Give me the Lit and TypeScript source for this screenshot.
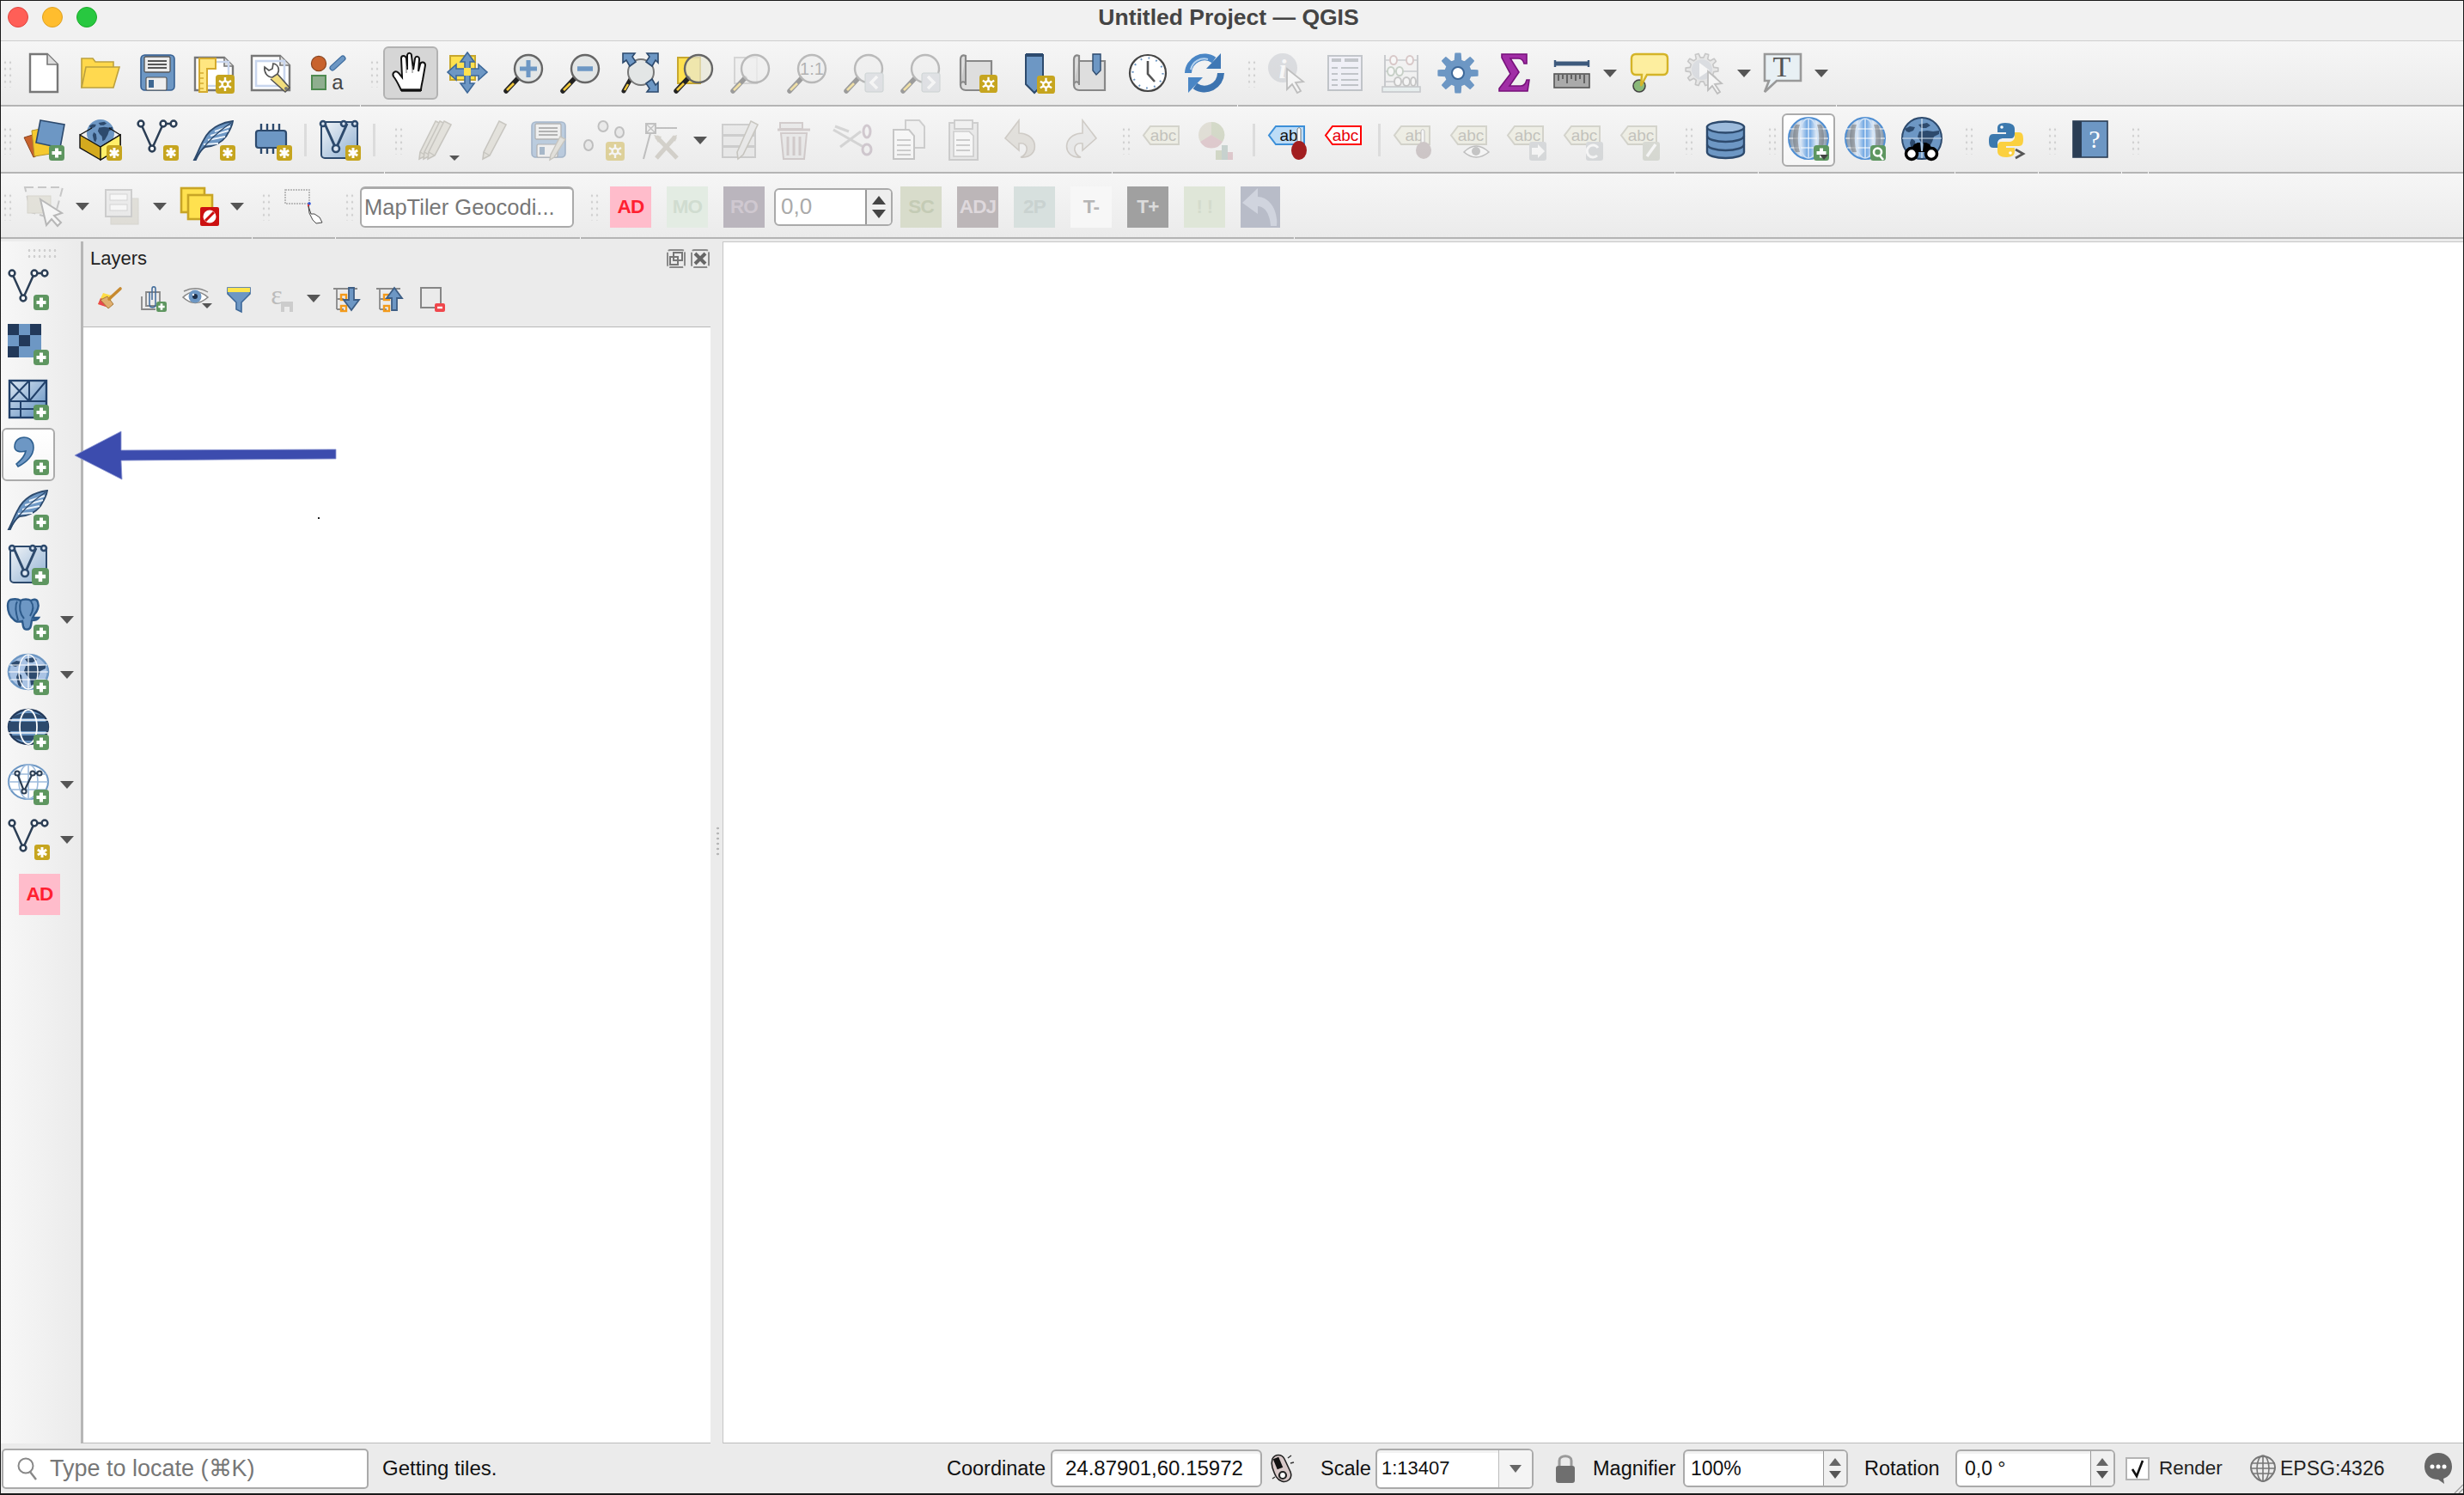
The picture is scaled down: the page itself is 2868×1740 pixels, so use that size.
import { LitElement, html, css, svg } from "lit";
import { customElement } from "lit/decorators.js";

const B = "#6d97c4", D = "#2d4a6d", N = "#2b3e55", GO = "#c6a51f", Y = "#ffe14f";

const gearD = (cx: number, cy: number, r1: number, r2: number, n: number) => {
  let d = "";
  const st = (Math.PI * 2) / n;
  for (let i = 0; i < n; i++) {
    const a = i * st;
    const pts = [[r1, a - st * 0.3], [r2, a - st * 0.16], [r2, a + st * 0.16], [r1, a + st * 0.3]];
    for (const [r, t] of pts) {
      d += (d ? "L" : "M") + (cx + r * Math.cos(t)).toFixed(1) + " " + (cy + r * Math.sin(t)).toFixed(1);
    }
  }
  return d + "Z";
};

const plus = (x = 30, y = 30, s = 18) => svg`<g transform="translate(${x} ${y}) scale(${s / 18})"><rect width="18" height="18" rx="3.5" fill="#5e9660"/><path d="M9 3.5v11M3.5 9h11" stroke="#fff" stroke-width="4"/></g>`;
const star = (x = 31, y = 30, s = 18) => svg`<g transform="translate(${x} ${y}) scale(${s / 18})"><rect width="18" height="18" rx="3" fill="${GO}"/><path d="M9 3v12M3.8 6l10.4 6M3.8 12l10.4-6" stroke="#fff" stroke-width="3"/></g>`;
const gearB = (x = 26, y = 26, s = 22) => svg`<g transform="translate(${x} ${y}) scale(${s / 22})"><rect width="22" height="22" rx="3.5" fill="${GO}"/><path d="M11 3v16M4 7l14 8M4 15l14-8" stroke="#fff" stroke-width="2.4"/><circle cx="11" cy="11" r="4.6" fill="#fff"/><circle cx="11" cy="11" r="2.2" fill="${GO}"/></g>`;

const vee = (sw = 2.5, c = N) => svg`<path d="M5 5 18 34 31 5H43" fill="none" stroke="${c}" stroke-width="${sw}"/><g fill="#fff" stroke="${c}" stroke-width="${sw}"><circle cx="5" cy="5" r="3.4"/><circle cx="31" cy="5" r="3.4"/><circle cx="43" cy="5" r="3.4"/><circle cx="18" cy="34" r="3.4"/></g>`;
const feather = () => svg`<path d="M46 2C31 4 19 10 12 24 8 31 5 39 1 47l2 0c3-7 7-13 11-15 8 0 18-4 24-12 3-5 7-11 8-18Z" fill="${B}" stroke="${D}" stroke-width="1.8"/><path d="M17 24l20-4M20 19l21-6M25 14l18-6M12 29l17-1" stroke="#e9f1fa" stroke-width="2"/><path d="M3 46C12 30 26 16 44 4" fill="none" stroke="${D}" stroke-width="1.4"/>`;
const virtualBox = () => svg`<rect x="3" y="3" width="42" height="42" rx="4" fill="url(#vg)" stroke="${D}" stroke-width="2"/><path d="M7 5 20 34 33 5" fill="none" stroke="${D}" stroke-width="3"/><g fill="#dfe8f3" stroke="${D}" stroke-width="2.6"><circle cx="20" cy="34" r="4"/><circle cx="5" cy="5" r="3"/><circle cx="29" cy="5" r="3"/><circle cx="42" cy="5" r="3"/></g>`;

const mag = (inner: unknown = "", lens = "#e3e6e6") => svg`<path d="M17 30 3 45" stroke="#222" stroke-width="5.5" stroke-linecap="round"/><path d="M12 36 4 44" stroke="#f2c93c" stroke-width="2.6"/><circle cx="29" cy="19" r="16" fill="${lens}" stroke="#666" stroke-width="2.4"/>${inner}`;
const tag = (t: string, stroke: string, fill: string, tc: string) => svg`<path d="M10 8H43V29H10L2 18.5Z" fill="${fill}" stroke="${stroke}" stroke-width="2"/><text x="25" y="25" font-family="Liberation Sans" font-size="19" text-anchor="middle" fill="${tc}">${t}</text>`;
const pencil = (t = "") => svg`<g transform="${t}"><path d="M31 2 39 6 20 42 12 46 13 38Z" fill="#cfcbbd" stroke="#8b8779" stroke-width="1.6"/><path d="M13 38 20 42" stroke="#8b8779" stroke-width="1.4"/></g>`;
const saveShape = () => svg`<rect x="5" y="3" width="39" height="41" rx="4.5" fill="${B}" stroke="#365f91" stroke-width="1.6"/><rect x="9" y="5" width="30" height="18" rx="1.5" fill="#ececec" stroke="#555" stroke-width="1.3"/><path d="M13 10H35M13 14H35M13 18H35" stroke="#555" stroke-width="1.9"/><rect x="11" y="29" width="24" height="15" rx="1.5" fill="#eee" stroke="#555" stroke-width="1.2"/><rect x="14" y="32" width="6" height="9" fill="#3e6791"/>`;
const scroll = () => svg`<path d="M10 4C6 2 4 5 4 8V38C4 42 7 44 10 44H40V10H10Z" fill="#dedede" stroke="#888" stroke-width="2.2"/><path d="M4 38C4 33 10 33 10 38V5" fill="#c9c9c9" stroke="#888" stroke-width="2"/>`;
const globeRaster = (extra: unknown = "") => svg`<ellipse cx="24" cy="22" rx="23" ry="24" fill="url(#gg)" stroke="#4f8ed2" stroke-width="2"/><path d="M24 -1V45M2 11H46M1 22H47M3 33H45" stroke="#fff" stroke-width="1.2"/><ellipse cx="24" cy="22" rx="11" ry="23" fill="none" stroke="#cfe2f6" stroke-width="1.6"/><path d="M9 6C5 14 5 30 9 38L14 38C11 30 11 14 14 6ZM39 6C43 14 43 30 39 38L34 38C37 30 37 14 34 6Z" fill="#585858" opacity=".4"/>${extra}`;
const continents = (c = D) => svg`<path d="M4 11l6-3 6 1-2 4-5 2-3-1ZM20 6l10-2 4 3-5 3-6 0ZM22 14l8-1 7 1 7-1 0 4-6 3-2 6-5 9-4 2-1-8-4-4-3-5 2-6ZM12 22l4 3 1 8-2 6-3-3-2-9Z" fill="${c}"/>`;

const ic: Record<string, unknown> = {
  file: svg`<path d="M8 2H28L40 14V46H8Z" fill="#fff" stroke="#777" stroke-width="2.4"/><path d="M28 2V14H40" fill="#ddd" stroke="#777" stroke-width="1.6"/>`,
  folder: svg`<path d="M2 41V7H15L18 11H39V18H8L2 41Z" fill="#ffd84a" stroke="#bca13f" stroke-width="1.6"/><path d="M7 17H46L39 41H2Z" fill="#ffd94f" stroke="#bca13f" stroke-width="1.6"/>`,
  save: saveShape(),
  layout: svg`<path d="M2 6H36L46 16V44H2Z" fill="#fff" stroke="#777" stroke-width="2.4"/><path d="M36 6V16H46" fill="#ddd" stroke="#777" stroke-width="1.6"/><rect x="8" y="11" width="33" height="28" fill="none" stroke="#c9d6ee" stroke-width="2.4"/><path d="M7 7H26V19H16V46H7Z" fill="#ffe680" stroke="#d4aa2e" stroke-width="2"/><path d="M7 24h5M7 30h5M7 36h5M7 42h5" stroke="#d4aa2e" stroke-width="1.6"/>${gearB()}`,
  manager: svg`<path d="M2 4H35L46 15V44H2Z" fill="#fff" stroke="#777" stroke-width="2.4"/><path d="M35 4V15H46" fill="#ddd" stroke="#777" stroke-width="1.6"/><rect x="7" y="10" width="33" height="29" fill="none" stroke="#c9d6ee" stroke-width="2.6"/><path d="M24 31 41 46 46 41 31 24" fill="#f2dd7c" stroke="#555" stroke-width="1.6"/><path d="M32 25C35 20 33 14 27 13L26 19 22 21 17 17C16 23 20 29 26 29Z" fill="#fff" stroke="#555" stroke-width="1.7"/><circle cx="42" cy="42" r="2" fill="#777"/>`,
  style: svg`<circle cx="14" cy="13" r="8.6" fill="#c8622c" stroke="#8a4520" stroke-width="1.2"/><path d="M30 18 42 7" stroke="#3c6a9c" stroke-width="7" stroke-linecap="round"/><path d="M30 18 42 7" stroke="${B}" stroke-width="4.6" stroke-linecap="round"/><rect x="6" y="27" width="16" height="16" fill="#8fae8f" stroke="#4e8a50" stroke-width="2"/><text x="36" y="43" font-family="Liberation Sans" font-size="24" text-anchor="middle" fill="#444">a</text>`,
  hand: svg`<path d="M13 44C10 38 8 33 4 28 2 24 6 20 10 24L14 29 13 7C13 3 18 3 19 7L20 20 20 3C21 0 25 0 25 4L27 20 29 7C30 4 34 4 34 8L33 22 35 14C36 10 41 11 41 15L38 32C37 37 36 41 36 44Z" fill="#fff" stroke="#111" stroke-width="2"/><path d="M13 44H36" stroke="#111" stroke-width="3.4"/><path d="M19 16V24M26 16V24" stroke="#777" stroke-width="1"/>`,
  pan: svg`<rect x="4" y="4" width="29" height="28" fill="${Y}" stroke="#c7a72f" stroke-width="2"/><path d="M24 0 32 11H27V19H37V14L47 23 37 32V27H27V36H32L24 47 16 36H21V27H11V32L1 23 11 14V19H21V11H16Z" fill="${B}" stroke="#3d6899" stroke-width="1.6"/><rect x="20" y="18" width="8" height="9" fill="${Y}"/>`,
  zin: mag(svg`<path d="M29 9V29M19 19H39" stroke="${B}" stroke-width="5"/>`),
  zout: mag(svg`<path d="M20 19H38" stroke="${B}" stroke-width="5.5"/>`),
  zfull: svg`<path d="M16 31 8 45" stroke="#222" stroke-width="5" stroke-linecap="round"/><path d="M13 37 9 44" stroke="#f2c93c" stroke-width="2.4"/><circle cx="28" cy="23" r="15" fill="#e3e6e6" stroke="#777" stroke-width="2"/><g fill="${B}" stroke="${D}" stroke-width="1.6"><path d="M7 1H21L18 5 22 11 15 16 11 9 7 12Z"/><path d="M48 1H35L38 5 34 11 41 16 45 9 48 12Z"/><path d="M48 46H35L38 42 34 36 41 31 45 38 48 35Z"/></g>`,
  zsel: svg`<rect x="5" y="6" width="26" height="30" fill="${Y}" stroke="#c7a72f" stroke-width="2"/>${mag("", "rgba(232,232,214,.7)")}`,
  zlayer: svg`<rect x="5" y="6" width="26" height="30" fill="#eee" stroke="#aaa" stroke-width="2"/>${mag("", "rgba(238,238,238,.7)")}`,
  znative: mag(svg`<text x="29" y="26" font-family="Liberation Sans" font-size="20" text-anchor="middle" fill="#555">1:1</text>`, "#eee"),
  zprev: svg`${mag("", "#eee")}<rect x="25" y="24" width="21" height="22" rx="2" fill="#c8ccd4" stroke="#9aa" stroke-width="1"/><path d="M39 28 32 35 39 42" fill="none" stroke="#fff" stroke-width="3.5"/>`,
  znext: svg`${mag("", "#eee")}<rect x="25" y="24" width="21" height="22" rx="2" fill="#c8ccd4" stroke="#9aa" stroke-width="1"/><path d="M32 28 39 35 32 42" fill="none" stroke="#fff" stroke-width="3.5"/>`,
  bmNew: svg`${scroll()}${gearB(26, 26, 21)}`,
  bmBlue: svg`<path d="M14 3H34V37L24 47 14 37Z" fill="${B}" stroke="${D}" stroke-width="2"/><path d="M14 3H34" stroke="${D}" stroke-width="4"/>${gearB(27, 27, 21)}`,
  bmShow: svg`${scroll()}<path d="M26 2H35V21L30 26 26 21Z" fill="${B}" stroke="${D}" stroke-width="1.4"/>`,
  clock: svg`<circle cx="24" cy="24" r="21" fill="#fff" stroke="#444" stroke-width="2.2"/><circle cx="24" cy="24" r="17.5" fill="none" stroke="${B}" stroke-width="2.2" stroke-dasharray="1.8 7.36"/><path d="M24 10V25L32 34" fill="none" stroke="#555" stroke-width="2.6"/>`,
  refresh: svg`<path d="M5 24A19 19 0 0 1 35 9" fill="none" stroke="#4a86c5" stroke-width="8"/><path d="M43 1V19H26Z" fill="#3f78b5"/><path d="M43 24A19 19 0 0 1 13 39" fill="none" stroke="#3d74b0" stroke-width="8"/><path d="M5 47V29H22Z" fill="#4a86c5"/><path d="M8 20A16 16 0 0 1 28 8" fill="none" stroke="#b7d3ee" stroke-width="2"/>`,
  identify: svg`<circle cx="18" cy="18" r="17" fill="#b8bcc4"/><text x="18" y="30" font-family="Liberation Serif" font-style="italic" font-weight="700" font-size="32" text-anchor="middle" fill="#fff">i</text><path d="M23 19 42 34 33 35 39 45 35 47 29 37 23 43Z" fill="#fff" stroke="#777" stroke-width="1.8"/>`,
  table: svg`<rect x="5" y="4" width="39" height="40" fill="#eef" stroke="#7c8590" stroke-width="2"/><path d="M9 9H20M24 9H40" stroke="#7c8590" stroke-width="4"/><path d="M9 18H16M20 18H40M9 25H16M20 25H40M9 32H16M20 32H40M9 38H16M20 38H40" stroke="#7c8590" stroke-width="2"/>`,
  abacus: svg`<path d="M5 3V40M43 3V40" stroke="#8d9299" stroke-width="2"/><rect x="2" y="40" width="44" height="6" fill="#dee" stroke="#8d9299" stroke-width="1.6"/><path d="M5 9H43M5 22H43M5 34H43" stroke="#8d9299" stroke-width="1.6"/><g fill="#fff" stroke-width="2"><ellipse cx="15" cy="9" rx="4" ry="5" stroke="#b28a8a"/><ellipse cx="34" cy="9" rx="4" ry="5" stroke="#b28a8a"/><ellipse cx="12" cy="22" rx="4" ry="5" stroke="#8aa08a"/><ellipse cx="22" cy="22" rx="4" ry="5" stroke="#8aa08a"/><ellipse cx="20" cy="34" rx="4" ry="5" stroke="#8a8a8a"/><ellipse cx="30" cy="34" rx="4" ry="5" stroke="#8a8a8a"/><ellipse cx="38" cy="34" rx="3" ry="5" stroke="#8a8a8a"/></g>`,
  gear: svg`<path d="${gearD(24, 24, 15, 23, 8)}" fill="${B}" stroke="${B}" stroke-width="1.6" stroke-linejoin="round"/><circle cx="24" cy="24" r="15" fill="${B}"/><circle cx="24" cy="24" r="7" fill="#fff" stroke="#3d6899" stroke-width="2"/>`,
  sigma: svg`<path d="M9 2H38V13H35C34 9 32 7 28 7H19L29 23 18 39H31C35 39 37 36 38 32H41L39 45H6V42L19 25 9 6Z" fill="#a12ea6" stroke="#77117b" stroke-width="1.6"/>`,
  ruler: svg`<path d="M5 13H44" stroke="#3e5a7d" stroke-width="5"/><path d="M5 9V17M44 9V17" stroke="#3e5a7d" stroke-width="2.4"/><rect x="4" y="25" width="41" height="16" fill="#aaa" stroke="#555" stroke-width="1.6"/><path d="M9 26V33M14 26V31M19 26V36M24 26V31M29 26V33M34 26V31M39 26V36" stroke="#444" stroke-width="1.4"/>`,
  comment: svg`<circle cx="13" cy="39" r="7" fill="#8ab87a" stroke="#444" stroke-width="1.6"/><path d="M9 2H41Q46 2 46 7V20Q46 26 41 26H22L15 39 16 26H9Q4 26 4 20V7Q4 2 9 2Z" fill="#fdee9f" stroke="#d4b428" stroke-width="2.4"/>`,
  action: svg`<path d="${gearD(20, 20, 14, 19, 10)}" fill="#d8d8d8" stroke="#888" stroke-width="1.6" stroke-linejoin="round"/><circle cx="20" cy="20" r="12" fill="#b8bec8"/><path d="M17 12 29 21 17 29Z" fill="#fff"/><path d="M27 22 43 36 35 37 41 46 38 48 32 39 27 44Z" fill="#fff" stroke="#777" stroke-width="1.8"/>`,
  tnote: svg`<path d="M3 2H45V33H17L3 46 8 33H3Z" fill="#e8f0f4" stroke="#999" stroke-width="2.6"/><text x="23" y="28" font-family="Liberation Serif" font-size="34" text-anchor="middle" fill="#555">T</text>`,
  dsm: svg`<path d="M1 21 14 17 25 38 12 44Z" fill="#c8622c" stroke="#8a4520" stroke-width="1"/><path d="M10 13 30 9 32 40 13 43Z" fill="#f5c92f" stroke="#b3922a" stroke-width="1"/><path d="M20 1 48 6 43 33 15 27Z" fill="${B}" stroke="${D}" stroke-width="1.6"/>${plus()}`,
  gpkg: svg`<circle cx="24" cy="16" r="16" fill="${B}"/><g transform="translate(8 0) scale(.68)">${continents()}</g><path d="M0 18 24 32 47 18 47 33 24 47 0 33Z" fill="#d4aa1e" stroke="#111" stroke-width="1.4"/><path d="M24 32 47 18 47 33 24 47Z" fill="#ffef6a" stroke="#111" stroke-width="1.4"/><path d="M0 18 14 10M47 18 34 10" stroke="#111" stroke-width="1.4"/>${star()}`,
  vStar: svg`${vee()}${star()}`,
  featherStar: svg`${feather()}${star()}`,
  chipStar: svg`<path d="M13 5V13M20 5V13M27 5V13M34 5V13M13 32V40M20 32V40M27 32V40M34 32V40" stroke="${D}" stroke-width="2.4"/><rect x="7" y="13" width="35" height="20" rx="3" fill="${B}" stroke="${D}" stroke-width="2.2"/>${star()}`,
  virtualStar: svg`${virtualBox()}${star()}`,
  pens: svg`${pencil("translate(-6 0)")}${pencil("translate(-1 0)")}${pencil("translate(4 0)")}`,
  pen: pencil("translate(2 0)"),
  saveEdit: svg`${saveShape()}<path d="M38 20 44 23 31 44 26 47 27 41Z" fill="#cfcbbd" stroke="#8b8779" stroke-width="1.4"/>`,
  digit: svg`<g fill="#ddd" stroke="#777" stroke-width="2"><ellipse cx="22" cy="8" rx="5.5" ry="6"/><ellipse cx="41" cy="15" rx="5" ry="6"/><ellipse cx="5" cy="30" rx="5" ry="6"/></g>${gearB(25, 26, 22)}`,
  vertex: svg`<rect x="6" y="5" width="11" height="11" fill="#e9e9e9" stroke="#777" stroke-width="2"/><path d="M7 6 16 15M16 6 7 15" stroke="#777" stroke-width="1.3"/><path d="M17 10H42M11 16 3 46" stroke="#777" stroke-width="2"/><path d="M18 20 42 45M40 20 18 45" stroke="#aaa394" stroke-width="5"/><path d="M15 18 24 20 20 27ZM42 18 36 20 40 26Z" fill="#aaa394"/>`,
  modattr: svg`<rect x="5" y="6" width="38" height="12" fill="#ddd" stroke="#999" stroke-width="2"/><rect x="5" y="19" width="38" height="12" fill="#ddd" stroke="#999" stroke-width="2"/><rect x="5" y="32" width="38" height="12" fill="#ddd" stroke="#999" stroke-width="2"/><path d="M38 2 46 6 29 41 23 46 22 38Z" fill="#ddd" stroke="#8b8779" stroke-width="1.6"/>`,
  trash: svg`<rect x="6" y="4" width="26" height="7" fill="#ddd" stroke="#a39494" stroke-width="2"/><path d="M3 12H41" stroke="#a39494" stroke-width="3"/><path d="M7 16H37L34 46H10Z" fill="#ddd" stroke="#a39494" stroke-width="2"/><path d="M15 20V42M22 20V42M29 20V42" stroke="#a39494" stroke-width="3"/>`,
  scissors: svg`<path d="M2 12 37 32M4 8 20 14" stroke="#aaa" stroke-width="3"/><path d="M10 32 34 14" stroke="#aaa" stroke-width="3"/><ellipse cx="41" cy="14" rx="4" ry="7" fill="none" stroke="#a08c9c" stroke-width="3"/><ellipse cx="41" cy="35" rx="5" ry="6" fill="none" stroke="#a08c9c" stroke-width="3"/>`,
  copy: svg`<path d="M20 1H36L42 8V33H20Z" fill="#eee" stroke="#999" stroke-width="2"/><path d="M6 12H24L30 19V46H6Z" fill="#fff" stroke="#888" stroke-width="2"/><path d="M10 24H26M10 30H26M10 36H26M10 41H26" stroke="#999" stroke-width="2"/>`,
  paste: svg`<rect x="5" y="4" width="33" height="43" fill="#ddd" stroke="#999" stroke-width="2"/><rect x="11" y="1" width="21" height="10" fill="#eee" stroke="#999" stroke-width="2"/><path d="M10 14H28L33 19V43H10Z" fill="#fff" stroke="#999" stroke-width="1.6"/><path d="M13 24H29M13 30H29M13 36H29" stroke="#999" stroke-width="2"/>`,
  undo: svg`<path d="M20 1 4 22 20 36V28C26 27 30 30 29 36 28 40 25 43 22 44 34 45 40 37 38 28 36 20 28 16 20 16Z" fill="#cbc6bc" stroke="#9d9488" stroke-width="1.6"/>`,
  redo: svg`<path d="M28 1 44 22 28 36V28C22 27 18 30 19 36 20 40 23 43 26 44 14 45 8 37 10 28 12 20 20 16 28 16Z" fill="#ddd" stroke="#9d9488" stroke-width="1.6"/>`,
  lblAbc: tag("abc", "#a7a693", "#e9e9d3", "#7d7c6e"),
  lblPie: svg`<circle cx="15" cy="18" r="15" fill="#c7c2ad"/><path d="M15 18V3A15 15 0 0 1 28 26Z" fill="#a8b58c"/><path d="M15 18 28 26A15 15 0 0 1 2 26Z" fill="#c4919a"/><rect x="20" y="36" width="7" height="11" fill="#a8b58c"/><rect x="27" y="30" width="7" height="17" fill="#8ea8a0"/><rect x="34" y="38" width="6" height="9" fill="#c4919a"/>`,
  lblBlue: svg`${tag("ab", "#3c8fd8", "#bcdcf7", "#111")}<path d="M35 12C35 9 39 9 39 12V30H35Z" fill="#fff" stroke="#777" stroke-width="1"/><ellipse cx="37" cy="36" rx="9" ry="11" fill="#a21e20"/>`,
  lblRed: tag("abc", "#ff0000", "#fff", "#e8000b"),
  lblPin: svg`${tag("ab", "#a7a693", "#e9e9d3", "#7d7c6e")}<path d="M33 14C33 11 37 11 37 14V30H33Z" fill="#fff" stroke="#777" stroke-width="1"/><ellipse cx="36" cy="36" rx="9" ry="10" fill="#9b8a8c"/>`,
  lblEye: svg`${tag("abc", "#a7a693", "#e9e9d3", "#7d7c6e")}<path d="M17 38Q31 24 46 38 31 50 17 38Z" fill="#fff" stroke="#777" stroke-width="1.6"/><circle cx="31" cy="37" r="5" fill="#888"/>`,
  lblMove: svg`${tag("abc", "#a7a693", "#e9e9d3", "#7d7c6e")}<rect x="27" y="26" width="20" height="22" rx="3" fill="#b3b8bc"/><path d="M30 33H37V29L45 37 37 45V41H30Z" fill="#fff"/>`,
  lblRot: svg`${tag("abc", "#a7a693", "#e9e9d3", "#7d7c6e")}<rect x="27" y="26" width="20" height="22" rx="3" fill="#b3b8bc"/><path d="M41 33A7 7 0 1 0 40 42" fill="none" stroke="#fff" stroke-width="3"/>`,
  lblEdit: svg`${tag("abc", "#a7a693", "#e9e9d3", "#7d7c6e")}<rect x="27" y="26" width="20" height="22" rx="3" fill="#b3b8a8"/><path d="M42 29 32 43" stroke="#fff" stroke-width="3.4"/>`,
  db: svg`<path d="M3 9V38C3 42 13 45 24.500 45S46 42 46 38V9Z" fill="${B}" stroke="${D}" stroke-width="2.4"/><ellipse cx="24.500" cy="9" rx="21.500" ry="6.500" fill="#9dbbdc" stroke="${D}" stroke-width="2.4"/><path d="M3 19C3 23 13 26 24.500 26S46 23 46 19M3 29C3 33 13 36 24.500 36S46 33 46 29" fill="none" stroke="${D}" stroke-width="2.4"/>`,
  gAdd: globeRaster(svg`${plus(30, 30, 18)}<path d="M37 41H47L42 47Z" fill="#444"/>`),
  gFind: globeRaster(svg`<rect x="30" y="30" width="18" height="18" rx="3.5" fill="#5e9660"/><circle cx="38.500" cy="38" r="4.500" fill="none" stroke="#fff" stroke-width="2.6"/><path d="M41 42 45 47" stroke="#fff" stroke-width="2.6"/>`),
  gBin: svg`<ellipse cx="24" cy="22" rx="23" ry="24" fill="${B}" stroke="${D}" stroke-width="2"/>${continents("#2d4a6d")}<path d="M24 -1V45M1 22H47" stroke="#d8e4f2" stroke-width="1.2"/><path d="M15 29 19 27H22L23 37H25L26 27H29L33 29 38 38H9Z" fill="#000"/><circle cx="12" cy="40" r="6.500" fill="#fff" stroke="#000" stroke-width="3.5"/><circle cx="35" cy="40" r="6.500" fill="#fff" stroke="#000" stroke-width="3.5"/>`,
  python: svg`<path d="M24 4C15 4 15 8 15 11V15H25V17H10C6 17 5 20 5 25 5 30 6 33 10 33H15V28C15 24 18 22 22 22H31C33 22 35 20 35 17V11C35 7 32 4 24 4Z" fill="#3c79ae"/><path d="M25 44C34 44 35 40 35 37V33H25V31H40C44 31 45 28 45 23 45 18 44 15 40 15H35V20C35 24 32 26 28 26H19C17 26 15 28 15 31V37C15 41 18 44 25 44Z" fill="#fbd03f"/><circle cx="20" cy="9" r="1.800" fill="#fff"/><circle cx="30" cy="39" r="1.800" fill="#fff"/><path d="M36 35 45 40 36 45" fill="none" stroke="#555" stroke-width="2.6"/>`,
  help: svg`<rect x="6" y="2" width="40" height="42" fill="${B}" stroke="${N}" stroke-width="1.6"/><rect x="6" y="2" width="10" height="42" fill="#2b3e55"/><text x="31" y="33" font-family="Liberation Serif" font-size="30" text-anchor="middle" fill="#fff">?</text>`,
  sel: svg`<path d="M2 1 46 1 36 38 9 30Z" fill="#ececec" stroke="#888" stroke-width="2" stroke-dasharray="10 5"/><rect x="5" y="11" width="27" height="20" fill="#cfcbb8" stroke="#b0ac98"/><path d="M20 15 45 31 36 34 44 42 40 46 33 38 27 45Z" fill="#fff" stroke="#666" stroke-width="2"/>`,
  attrSel: svg`<rect x="12" y="14" width="32" height="30" fill="#c9c5b6" stroke="#b5b2a4"/><rect x="6" y="4" width="30" height="31" fill="#e2e2e2" stroke="#999" stroke-width="2"/><rect x="11" y="9" width="20" height="7" fill="#fff" stroke="#aaa"/><rect x="11" y="21" width="20" height="7" fill="#fff" stroke="#aaa"/>`,
  desel: svg`<rect x="4" y="2" width="27" height="28" fill="${Y}" stroke="#c8a526" stroke-width="2.6"/><rect x="12" y="10" width="28" height="28" fill="${Y}" stroke="#c8a526" stroke-width="2.6"/><rect x="26" y="24" width="22" height="22" rx="2" fill="#cc1010"/><circle cx="37" cy="35" r="7.500" fill="#fff"/><path d="M32 40 42 30" stroke="#cc1010" stroke-width="3"/>`,
  touch: svg`<rect x="4" y="4" width="28" height="16" fill="none" stroke="#aaa" stroke-width="1.500" stroke-dasharray="2 1"/><circle cx="32" cy="20" r="1.800" fill="#2b52d8"/><circle cx="31" cy="22" r="1.200" fill="#d33"/><path d="M31 23 34 32 38 32 44 36 47 42 40 43 36 39 32 31Z" fill="#fff" stroke="#333" stroke-width=".9"/>`,
  undoLbl: svg`<rect x="0" y="0" width="46" height="48" fill="#b8bcc8"/><path d="M20 2 2 19 20 32V23C27 23 34 30 35 46H42C44 27 33 12 20 12Z" fill="#d0d4de"/>`,
  layerV: svg`${vee()}${plus(30, 30)}`,
  raster: svg`<path d="M0 0H39V39H0Z" fill="${B}"/><path d="M0 0H13V13H0ZM26 0H39V13H26ZM13 13H26V26H13ZM0 26H13V39H0Z" fill="#22395a"/>${plus(30, 30)}`,
  mesh: svg`<rect x="2" y="2" width="43" height="43" fill="url(#mg)" stroke="#21406a" stroke-width="2.400"/><path d="M2 26H45M25 2V26M2 2 25 26M25 2 2 26M25 26 45 2M15 26V45M2 35H32" stroke="#21406a" stroke-width="2"/>${plus(30, 30)}`,
  comma: svg`<path d="M8 15C8 8 13 4 19 4 26 4 30 9 30 16 30 25 22 33 12 38L10 35C15 31 20 26 21 20 14 22 8 20 8 15Z" fill="${B}" stroke="#2d5f8f" stroke-width="1.600"/>${plus(30, 30)}`,
  feather: svg`${feather()}${plus(30, 30)}`,
  virtual: svg`${virtualBox()}${plus(28, 28, 20)}`,
  pg: svg`<path d="M3 1C7 0 12 0 15 2 18 0 24 0 27 2 30 0 34 0 35 4 37 9 34 15 31 18L29 22 36 22C34 25 30 25 28 25L27 31C26 37 19 37 18 32L17 26C13 27 9 27 7 24 3 21 0 15 0 8 0 5 1 2 3 1Z" fill="${B}" stroke="#2d5a8a" stroke-width="2.400"/><path d="M11 3C8 8 9 15 12 25M27 3C31 8 29 15 26 20M15 3C13 10 14 17 19 23" fill="none" stroke="#2d5a8a" stroke-width="2"/>${plus(30, 30)}`,
  wms: svg`<ellipse cx="24" cy="21" rx="23" ry="20" fill="#a9c3e4" stroke="${B}" stroke-width="2.600"/>${continents()}<path d="M2 13H46M1 21H47M3 30H45M24 1V41" stroke="#fff" stroke-width="1.200"/><ellipse cx="24" cy="21" rx="11" ry="20" fill="none" stroke="#fff" stroke-width="1.400"/>${plus(30, 30)}`,
  wcs: svg`<ellipse cx="24" cy="21" rx="23" ry="20" fill="${B}" stroke="#22395a" stroke-width="2.400"/><path d="M5 11C10 3 38 3 43 11ZM1 15H47V26H1ZM5 31H43C38 39 10 39 5 31Z" fill="#2d4a6d"/><path d="M1 13H47M1 28H47" stroke="#fff" stroke-width="1.600"/><ellipse cx="24" cy="21" rx="10" ry="20" fill="none" stroke="#fff" stroke-width="1.800"/>${plus(30, 30)}`,
  wfs: svg`<ellipse cx="24" cy="21" rx="23" ry="20" fill="#fff" stroke="${B}" stroke-width="2"/><path d="M3 12H45M1 21H47M3 30H45M24 1V41" stroke="#9dbbdc" stroke-width="1.600"/><ellipse cx="24" cy="21" rx="11" ry="20" fill="none" stroke="#9dbbdc" stroke-width="1.600"/><path d="M11 11 19 32 29 11H37" fill="none" stroke="${N}" stroke-width="2.200"/><g fill="#fff" stroke="${N}" stroke-width="2"><circle cx="11" cy="11" r="2.600"/><circle cx="29" cy="11" r="2.600"/><circle cx="37" cy="11" r="2.600"/><circle cx="19" cy="32" r="2.600"/></g>${plus(30, 30)}`,
};

const sm: Record<string, unknown> = {
  brush: svg`<path d="M2 22 8 9 18 12 16 26Z" fill="#ffdc45"/><path d="M2 22 5 15 14 19 14 26Z" fill="#e9474f"/><path d="M5 17 13 13 20 22 14 27Z" fill="#e0b070" stroke="#a97a3a" stroke-width="1"/><path d="M15 16 28 4" stroke="#c78a30" stroke-width="3.600" stroke-linecap="round"/>`,
  group: svg`<path d="M8 8H24V24H8ZM3 13V28H19" fill="none" stroke="#888" stroke-width="1.800"/><path d="M12 8V22C12 27 19 27 19 22V4C19 1 15 1 15 4V17" fill="none" stroke="#3f6a9a" stroke-width="1.500"/>${plus(20, 19, 12)}`,
  eye: svg`<path d="M1 14Q15 1 30 14 15 27 1 14Z" fill="#fff" stroke="#888" stroke-width="1.600"/><path d="M2 7Q16 0 30 8" fill="none" stroke="#888" stroke-width="1.400"/><circle cx="15" cy="13" r="7.500" fill="${B}"/><circle cx="15" cy="13" r="3" fill="#1c2d46"/><circle cx="13" cy="11" r="1.200" fill="#fff"/><path d="M23 21H35L29 27Z" fill="#555"/>`,
  filter: svg`<path d="M3 3H29V10L19 20V31L13 28V20L3 10Z" fill="${B}" stroke="#3d6899" stroke-width="1.600"/><rect x="3" y="3" width="26" height="5" fill="#ffe54d"/>`,
  eps: svg`<text x="10" y="22" font-family="Liberation Serif" font-size="32" text-anchor="middle" fill="#bbb">ε</text><path d="M15 19H29V31H25V25H19V31H15Z" fill="#ccc"/>`,
  expand: svg`<path d="M2 4H30M6 4V28M6 16H14M6 28H14" stroke="#8a8a8a" stroke-width="1.800"/><rect x="11" y="11" width="6" height="6" fill="none" stroke="#f39a1a" stroke-width="2.400"/><rect x="11" y="24" width="6" height="6" fill="none" stroke="#f39a1a" stroke-width="2.400"/><path d="M20 3H26V17H32L23 29 14 17H20Z" fill="${B}" stroke="#3d5e85" stroke-width="1.800"/>`,
  collapse: svg`<path d="M2 4H30M6 4V28M6 16H14M6 28H14" stroke="#8a8a8a" stroke-width="1.800"/><rect x="11" y="11" width="6" height="6" fill="none" stroke="#f39a1a" stroke-width="2.400"/><rect x="11" y="24" width="6" height="6" fill="none" stroke="#f39a1a" stroke-width="2.400"/><path d="M20 29H26V15H32L23 3 14 15H20Z" fill="${B}" stroke="#3d5e85" stroke-width="1.800"/>`,
  remove: svg`<rect x="4" y="3" width="23" height="23" fill="none" stroke="#868686" stroke-width="2"/><rect x="20" y="21" width="12" height="10" rx="2" fill="#f0474c"/><path d="M23 26H29" stroke="#fff" stroke-width="2.400"/>`,
};

type Item = [string, string?, string?];
const T = (i: string): Item => ["t", i];
const O = (i: string): Item => ["o", i];
const DD: Item = ["d"];
const SEP: Item = ["s"];

const row1: Item[][] = [
  [T("file"), T("folder"), T("save"), T("layout"), T("manager"), T("style")],
  [["a", "hand"], T("pan"), T("zin"), T("zout"), T("zfull"), T("zsel"), O("zlayer"), O("znative"), O("zprev"), O("znext"), T("bmNew"), T("bmBlue"), T("bmShow"), T("clock"), T("refresh")],
  [O("identify"), O("table"), O("abacus"), T("gear"), T("sigma"), T("ruler"), DD, T("comment"), O("action"), DD, T("tnote"), DD],
];
const row2: Item[][] = [
  [T("dsm"), T("gpkg"), T("vStar"), T("featherStar"), T("chipStar"), SEP, T("virtualStar"), SEP],
  [["m", "pens"], O("pen"), O("saveEdit"), O("digit"), O("vertex"), DD, O("modattr"), O("trash"), O("scissors"), O("copy"), O("paste"), O("undo"), O("redo")],
  [O("lblAbc"), O("lblPie"), SEP, T("lblBlue"), T("lblRed"), SEP, O("lblPin"), O("lblEye"), O("lblMove"), O("lblRot"), O("lblEdit")],
  [T("db")],
  [["w", "gAdd"], T("gFind"), T("gBin")],
  [T("python")],
  [T("help")],
  [],
];

const side: [string, boolean, boolean?][] = [
  ["layerV", false], ["raster", false], ["mesh", false], ["comma", false, true], ["feather", false], ["virtual", false],
  ["pg", true], ["wms", true], ["wcs", false], ["wfs", true], ["vStar", true],
];

@customElement("app-root")
export class AppRoot extends LitElement {
  static styles = css`
    :host { display: block; width: 2868px; height: 1740px; box-sizing: border-box; position: relative; overflow: hidden;
      background: #ececec; border: solid #1a1a1a; border-width: 1px 1px 2px 1px; font-family: "Liberation Sans", Arial, sans-serif; color: #111; }
    svg { display: block; overflow: visible; flex: none; }
    .title { height: 38px; padding-bottom: 8px; display: grid; grid-template-columns: 1fr auto 1fr; align-items: center; background: #f1f1f1; border-bottom: 1px solid #cfcfcf; }
    .lights { display: flex; gap: 16px; padding-left: 8px; }
    .light { width: 24px; height: 24px; border-radius: 50%; box-sizing: border-box; border: 1px solid; }
    .red { background: #ff5f57; border-color: #e0443e; }
    .amber { background: #ffbd2e; border-color: #dea123; }
    .green { background: #28c840; border-color: #1aab29; }
    .title b { font-size: 26.500px; font-weight: 700; color: #444; margin-right: 8px; }
    .bar { display: flex; box-sizing: border-box; padding-left: 2px; background: linear-gradient(#f6f6f6, #ebebeb); border-bottom: 2px solid #b4b4b4; }
    .h76 { height: 76px; } .h78 { height: 78px; padding-top: 2px; } .low { padding-top: 3px; }
    .group { display: flex; align-items: center; position: relative; padding-right: 16px; }
    .group::after { content: ""; position: absolute; right: 10px; bottom: -2px; width: 1px; height: 2px; background: #f8f8f8; }
    .group.wide { padding-right: 18px; }
    .handle { width: 15px; flex: none; display: flex; }
    .handle i { display: block; width: 12px; height: 33px; background-image: radial-gradient(circle, #cfcfcf 1.2px, transparent 1.6px); background-size: 6px 7.500px; }
    .tool { width: 66px; height: 62px; flex: none; display: flex; align-items: center; justify-content: center; position: relative; box-sizing: border-box; }
    .off svg { opacity: .4; }
    .active { background: #d6d6d6; border: 2px solid #b2b2b2; border-radius: 6px; width: 64px; margin: 0 1px; }
    .chosen { background: linear-gradient(#fff, #f6f6f6); border: 2px solid #ababab; border-radius: 6px; width: 62px; margin: 0 2px; }
    .dd { width: 24px; flex: none; display: flex; justify-content: center; }
    .tri { width: 0; height: 0; border: 8px solid transparent; border-top: 9px solid #555; border-bottom: 0; }
    .mini { position: absolute; left: 50px; top: 49px; border-width: 6px; border-top-width: 6px; border-bottom-width: 0; }
    .sep { width: 14px; flex: none; display: flex; justify-content: center; }
    .sep i { display: block; width: 3px; height: 38px; background: #dcdcdc; }
    .lbl { width: 48px; height: 48px; display: flex; align-items: center; justify-content: center; font-size: 22.500px; font-weight: 700; letter-spacing: -.8px; }
    .locinput { width: 249px; height: 48px; margin: 0 2px 0 3px; box-sizing: border-box; background: #fff; border: 2px solid #aaa; border-top-width: 3px; border-radius: 6px; display: flex; align-items: center; padding-left: 3px; font-size: 25.500px; color: #777; white-space: nowrap; overflow: hidden; flex: none; }
    .spin0 { width: 138px; height: 44px; margin: 0 0 0 2px; box-sizing: border-box; background: #fff; border: 2px solid #aaa; border-radius: 6px; display: flex; flex: none; font-size: 26px; color: #aaa; }
    .spin0 span { flex: 1; display: flex; align-items: center; padding-left: 6px; }
    .spinbtn { width: 28px; background: #eee; border-left: 2px solid #999; display: flex; flex-direction: column; align-items: center; justify-content: center; gap: 6px; border-radius: 0 4px 4px 0; flex: none; }
    .up, .down { width: 0; height: 0; border-left: 8px solid transparent; border-right: 8px solid transparent; }
    .up { border-bottom: 10px solid #444; } .down { border-top: 10px solid #444; }
    .spinbtn.small { width: 26px; background: #f0f0f0; border-left: 1px solid #999; }
    .spinbtn.small .up { border-bottom-color: #666; border-width: 0 7px 9px; }
    .spinbtn.small .down { border-top-color: #555; border-width: 9px 7px 0; }
    .main { height: 1402px; display: flex; }
    .side { width: 93px; box-sizing: border-box; margin-top: 3px; background: linear-gradient(90deg, #f7f7f7, #ebebeb); display: flex; flex-direction: column; flex: none; padding: 7px 0 0 1px; }
    .divider { width: 3px; flex: none; background: #b6b6b6; margin-top: 3px; }
    .vgrip { height: 14px; padding-left: 29px; flex: none; margin-bottom: 3px; }
    .vgrip i { display: block; width: 36px; height: 14px; background-image: radial-gradient(circle, #cfcfcf 1.2px, transparent 1.6px); background-size: 6px 7px; }
    .srow { display: flex; align-items: center; height: 64px; flex: none; }
    .scell { width: 62px; height: 62px; display: flex; align-items: center; justify-content: center; box-sizing: border-box; flex: none; }
    .scell.chosen { margin: 0; }
    .sdd { width: 26px; display: flex; justify-content: center; margin-left: 1px; }
    .sad { height: 64px; padding-left: 20px; display: flex; align-items: center; }
    .dock { width: 730px; flex: none; background: #ebebeb; display: flex; flex-direction: column; padding-top: 3px; box-sizing: border-box; }
    .dhead { height: 40px; display: flex; align-items: center; padding: 0 0 0 8px; flex: none; font-size: 22px; color: #222; justify-content: space-between; }
    .dbtns { display: flex; gap: 6px; margin-right: 1px; }
    .ltools { height: 53px; padding-bottom: 6px; display: flex; align-items: center; padding-left: 6px; flex: none; }
    .lcell { width: 50px; display: flex; justify-content: center; flex: none; }
    .ltools .tri { border-width: 8px; border-top-width: 9px; border-bottom-width: 0; }
    .ldd { width: 24px; display: flex; justify-content: center; }
    .tree { flex: 1; background: #fff; border-top: 1px solid #b8b8b8; border-right: 1px solid #b8b8b8; border-bottom: 1px solid #bbb; margin-right: -1px; }
    .split { width: 14px; flex: none; background: #ebebeb; display: flex; align-items: center; justify-content: center; }
    .split i { display: block; width: 3px; height: 36px; background-image: radial-gradient(circle, #b8b8b8 1.2px, transparent 1.6px); background-size: 3px 6px; margin-left: 3px; }
    .map { flex: 1; background: #fff; margin-top: 3px; border-top: 1px solid #c6c6c6; border-left: 1px solid #c6c6c6; border-bottom: 1px solid #bbb; }
    .status { height: 58px; display: flex; align-items: center; background: #ebebeb; font-size: 23.500px; }
    .status > * { flex: none; }
    .loc { width: 427px; height: 47px; box-sizing: border-box; background: #fff; border: 2px solid #aaa; border-radius: 5px; display: flex; align-items: center; gap: 14px; padding-left: 16px; color: #777; font-size: 27px; margin-left: 1px; white-space: nowrap; }
    .msg { margin-left: 16px; width: 657px; font-size: 24px; }
    .lab { white-space: nowrap; }
    .inp { height: 44px; box-sizing: border-box; background: #fff; border: 2px solid #aaa; border-radius: 6px; display: flex; align-items: stretch; box-shadow: inset 0 3px 0 #f2f2f2; }
    .inp span { flex: 1; display: flex; align-items: center; }
    .coord-l { width: 112px; margin-right: 9px; }
    .coord { width: 246px; font-size: 24px; }
    .coord span { padding-left: 15px; }
    .mouse { width: 30px; margin: 0 30px 0 8px; display: flex; justify-content: center; }
    .scale-l { width: 55px; margin-right: 9px; }
    .combo { width: 184px; height: 47px; font-size: 22px; }
    .combo span { padding-left: 5px; }
    .cbtn { width: 38px; border-left: 1px solid #bbb; display: flex; align-items: center; justify-content: center; background: #f4f4f4; border-radius: 0 4px 4px 0; }
    .cbtn .tri { border-width: 7px; border-top-width: 9px; border-bottom-width: 0; border-top-color: #666; }
    .lock { width: 24px; margin: 0 20px 0 25px; }
    .mag-l { width: 96px; margin-right: 9px; }
    .mag { width: 192px; font-size: 23px; } .mag span { padding-left: 7px; }
    .rot-l { width: 87px; margin: 0 19px; }
    .rot { width: 186px; font-size: 23px; } .rot span { padding-left: 9px; }
    .check { width: 28px; height: 27px; box-sizing: border-box; background: #fff; border: 2px solid #b4b4b4; margin: 0 11px 0 12px; display: flex; align-items: center; justify-content: center; }
    .rend-l { width: 73px; margin-right: 35px; color: #222; font-size: 22.500px; }
    .eglobe { width: 26px; margin-right: 7px; }
    .epsg { width: 120px; margin-right: 47px; color: #222; font-size: 23px; }
    .bubble { width: 34px; }
    .arrow { position: absolute; left: 85px; top: 499px; }
    .speck { position: absolute; left: 369px; top: 601px; width: 2px; height: 2px; background: #222; }
    .grip { position: absolute; right: 0; bottom: 0; }
  `;

  private item(it: Item) {
    const [k, a] = it;
    if (k === "d") return html`<div class="dd"><div class="tri"></div></div>`;
    if (k === "s") return html`<div class="sep"><i></i></div>`;
    const cls = k === "o" || k === "m" ? "off" : k === "a" ? "active" : k === "w" ? "chosen" : "";
    return html`<div class="tool ${cls}"><svg width="48" height="48" viewBox="0 0 48 48">${ic[a as string]}</svg>${k === "m" ? html`<div class="tri mini"></div>` : ""}</div>`;
  }

  private group(items: unknown, wide = false) {
    return html`<div class="group ${wide ? "wide" : ""}"><div class="handle"><i></i></div>${items}</div>`;
  }

  render() {
    return html`
      <svg width="0" height="0" style="position:absolute"><defs>
        <linearGradient id="vg" x1="0" y1="0" x2="1" y2="1"><stop offset="0" stop-color="#f1f4f8"/><stop offset="1" stop-color="#8fb0d2"/></linearGradient>
        <linearGradient id="mg" x1="0" y1="0" x2="1" y2="1"><stop offset="0" stop-color="#dbe6f2"/><stop offset="1" stop-color="#5d8cbf"/></linearGradient>
        <linearGradient id="gg" x1="0" y1="0" x2="1" y2="0"><stop offset="0" stop-color="#7f8fa0"/><stop offset=".3" stop-color="#dfe9f5"/><stop offset=".5" stop-color="#5f9de0"/><stop offset=".7" stop-color="#dfe9f5"/><stop offset="1" stop-color="#7f8fa0"/></linearGradient>
      </defs></svg>

      <div class="title">
        <div class="lights"><div class="light red"></div><div class="light amber"></div><div class="light green"></div></div>
        <b>Untitled Project — QGIS</b><div></div>
      </div>

      <div class="bar h76">${row1.map((g) => this.group(g.map((i) => this.item(i))))}</div>
      <div class="bar h78">${row2.map((g, i) => this.group(g.map((x) => this.item(x)), i === 2))}</div>
      <div class="bar h76 low">
        ${this.group(html`
          ${this.item(O("sel"))}${this.item(DD)}${this.item(O("attrSel"))}${this.item(DD)}${this.item(T("desel"))}${this.item(DD)}`)}
        ${this.group(this.item(T("touch")))}
        ${this.group(html`<div class="locinput">MapTiler Geocodi...</div>`)}
        ${this.group(html`
          ${this.boxLabel("AD", "#ffbccb", "#ff2030")}
          ${this.boxLabel("MO", "#e3ece3", "#d0dcd0")}
          ${this.boxLabel("RO", "#bab5bd", "#cfc8d0")}
          <div class="spin0"><span>0,0</span><div class="spinbtn"><div class="up"></div><div class="down"></div></div></div>
          ${this.boxLabel("SC", "#d8dccb", "#c4cbb5")}
          ${this.boxLabel("ADJ", "#bcb6b8", "#ded8dc")}
          ${this.boxLabel("2P", "#d7e0de", "#c9d2d0")}
          ${this.boxLabel("T-", "#f7f7f7", "#b5b5b5")}
          ${this.boxLabel("T+", "#a0a0a0", "#dcdcdc")}
          ${this.boxLabel("! !", "#dfe6d8", "#d4dbcc")}
          <div class="tool"><svg width="48" height="48" viewBox="0 0 48 48">${ic.undoLbl}</svg></div>`)}
      </div>

      <div class="main">
        <div class="side">
          <div class="vgrip"><i></i></div>
          ${side.map(([n, dd, chosen]) => html`<div class="srow">
            <div class="scell ${chosen ? "chosen" : ""}"><svg width="48" height="48" viewBox="0 0 48 48">${ic[n]}</svg></div>
            ${dd ? html`<div class="sdd"><div class="tri"></div></div>` : ""}
          </div>`)}
          <div class="sad">${this.boxLabel("AD", "#ffbccb", "#ff2030", true)}</div>
        </div>
        <div class="divider"></div>
        <div class="dock">
          <div class="dhead"><span>Layers</span>
            <div class="dbtns">
              <svg width="22" height="22" viewBox="0 0 22 22"><rect x="1" y="1" width="20" height="20" rx="3" fill="none" stroke="#8a8a8a" stroke-width="2" stroke-dasharray="16 2"/><path d="M8 4H18V13H8ZM4 9H13V18H4Z" fill="none" stroke="#777" stroke-width="2"/></svg>
              <svg width="22" height="22" viewBox="0 0 22 22"><rect x="1" y="1" width="20" height="20" rx="3" fill="none" stroke="#8a8a8a" stroke-width="2" stroke-dasharray="16 2"/><path d="M5 5 17 17M17 5 5 17" stroke="#666" stroke-width="4"/></svg>
            </div>
          </div>
          <div class="ltools">
            ${["brush", "group", "eye", "filter", "eps"].map((n) => this.smallIcon(n))}
            <div class="ldd"><div class="tri"></div></div>
            ${["expand", "collapse", "remove"].map((n) => this.smallIcon(n))}
          </div>
          <div class="tree"></div>
        </div>
        <div class="split"><i></i></div>
        <div class="map"></div>
      </div>

      <div class="status">
        <div class="loc"><svg width="24" height="28" viewBox="0 0 24 28"><circle cx="10" cy="11" r="8.500" fill="none" stroke="#888" stroke-width="2"/><path d="M15 18 22 27" stroke="#888" stroke-width="2.400"/></svg><span>Type to locate (⌘K)</span></div>
        <div class="msg">Getting tiles.</div>
        <div class="lab coord-l">Coordinate</div>
        <div class="inp coord"><span>24.87901,60.15972</span></div>
        <div class="mouse"><svg width="30" height="34" viewBox="0 0 30 34"><path d="M4 6C7 0 15 0 18 6L25 21C28 29 21 34 15 32 9 30 7 25 4 16 3 12 3 9 4 6Z" fill="#d8c8c8" stroke="#222" stroke-width="1.600"/><path d="M8 5 13 17" stroke="#111" stroke-width="7"/><circle cx="16" cy="25" r="4" fill="#fff" stroke="#222" stroke-width="2.200"/><path d="M22 5 26 2M25 11 29 10M4 29 7 27" stroke="#333" stroke-width="1.500"/></svg></div>
        <div class="lab scale-l">Scale</div>
        <div class="inp combo"><span>1:13407</span><div class="cbtn"><div class="tri"></div></div></div>
        <div class="lock"><svg width="24" height="36" viewBox="0 0 24 36"><path d="M5 18V9C5 2 19 2 19 9V18" fill="none" stroke="#9a9a9a" stroke-width="3"/><rect x="1" y="15" width="22" height="20" rx="3" fill="#6f6f6f"/></svg></div>
        <div class="lab mag-l">Magnifier</div>
        <div class="inp mag"><span>100%</span><div class="spinbtn small"><div class="up"></div><div class="down"></div></div></div>
        <div class="lab rot-l">Rotation</div>
        <div class="inp rot"><span>0,0 °</span><div class="spinbtn small"><div class="up"></div><div class="down"></div></div></div>
        <div class="check"><svg width="18" height="22" viewBox="0 0 18 22"><path d="M3 12 8 20 15 2" fill="none" stroke="#111" stroke-width="2.600"/></svg></div>
        <div class="lab rend-l">Render</div>
        <div class="eglobe"><svg width="32" height="32" viewBox="0 0 32 32" style="margin-left:-3px"><path d="M16 2C24 2 30 8 30 15 30 22 22 31 16 31 10 31 2 22 2 15 2 8 8 2 16 2Z" fill="none" stroke="#777" stroke-width="2"/><path d="M2 10H30M2 16H30M4 22H28M16 2V31" stroke="#777" stroke-width="1.600"/><ellipse cx="16" cy="16" rx="7" ry="15" fill="none" stroke="#777" stroke-width="1.600"/></svg></div>
        <div class="lab epsg">EPSG:4326</div>
        <div class="bubble"><svg width="34" height="38" viewBox="0 0 34 38"><path d="M17 1C8 1 1 7 1 17 1 26 8 32 17 32L24 37 23 31C29 29 33 24 33 17 33 7 26 1 17 1Z" fill="#666"/><circle cx="10" cy="17" r="2.500" fill="#fff"/><circle cx="17" cy="17" r="2.500" fill="#fff"/><circle cx="24" cy="17" r="2.500" fill="#fff"/></svg></div>
      </div>

      <svg class="arrow" width="308" height="60" viewBox="0 0 308 60"><path d="M1 30 55 2V24L305 23V34L55 36 56 58Z" fill="#3c4cae" stroke="#8d97d2" stroke-width=".8"/></svg>
      <div class="speck"></div>
      <svg class="grip" width="12" height="12" viewBox="0 0 12 12"><path d="M12 2 2 12M12 7 7 12" stroke="#999" stroke-width="1.200"/></svg>
    `;
  }

  private boxLabel(t: string, bg: string, fg: string, bare = false) {
    const box = html`<div class="lbl" style="background:${bg};color:${fg}">${t}</div>`;
    return bare ? box : html`<div class="tool">${box}</div>`;
  }

  private smallIcon(n: string) {
    return html`<div class="lcell"><svg width="32" height="32" viewBox="0 0 32 32">${sm[n]}</svg></div>`;
  }
}
